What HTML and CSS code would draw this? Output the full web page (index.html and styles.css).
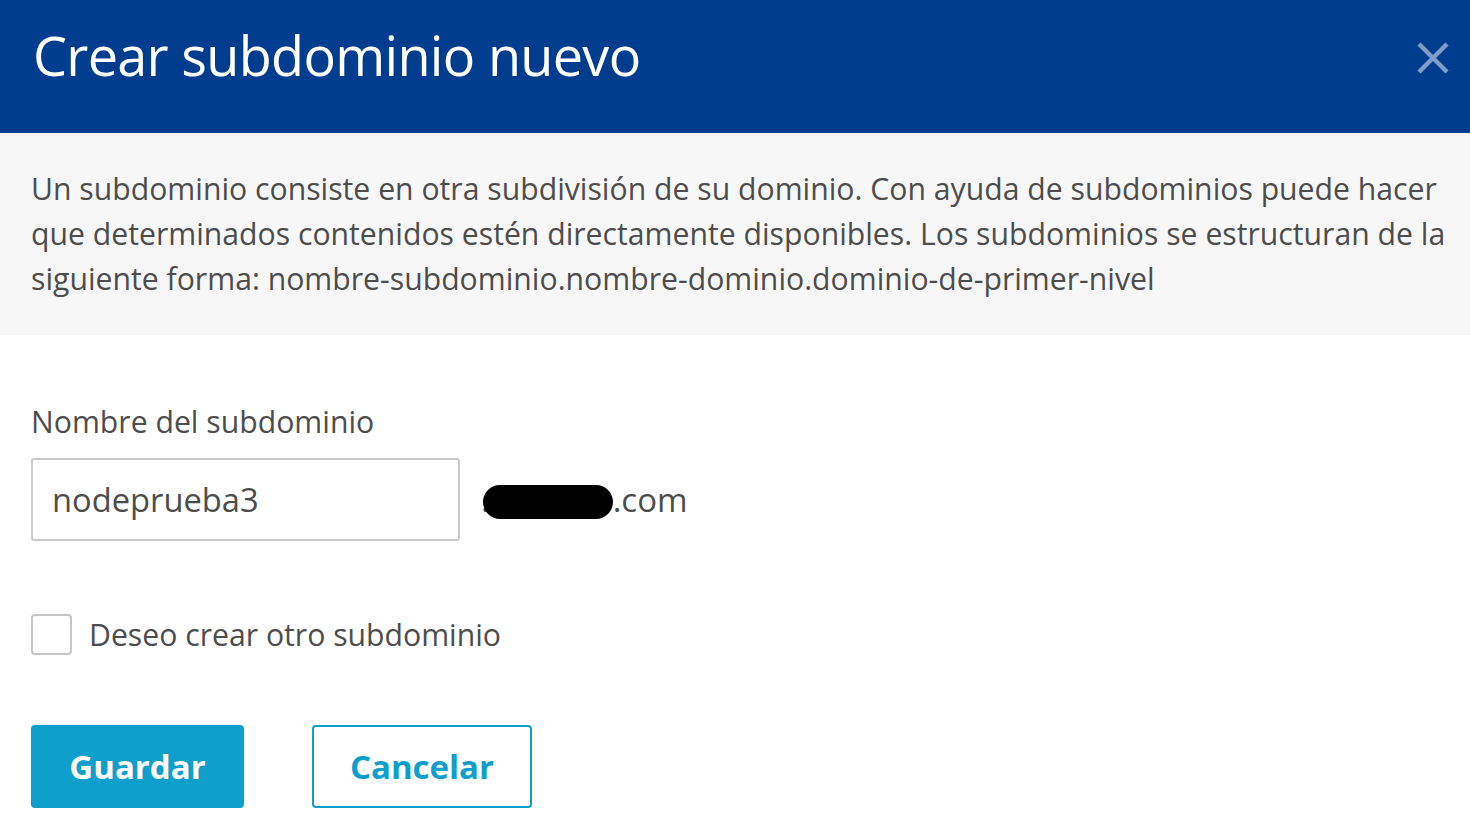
FILE: index.html
```html
<!DOCTYPE html>
<html lang="es">
<head>
<meta charset="utf-8">
<title>Crear subdominio nuevo</title>
<link rel="stylesheet" href="styles.css">
</head>
<body>
<div class="dialog">
  <header class="head">
    <h1 class="title">Crear subdominio nuevo</h1>
    <button class="close" aria-label="Cerrar">
      <svg width="34" height="34" viewBox="0 0 34 34"><path d="M3 3 L31 31 M31 3 L3 31" stroke="currentColor" stroke-width="4.5" fill="none"/></svg>
    </button>
  </header>
  <section class="info">
    <p>Un subdominio consiste en otra subdivisión de su dominio. Con ayuda de subdominios puede hacer que determinados contenidos estén directamente disponibles. Los subdominios se estructuran de la siguiente forma: nombre-subdominio.nombre-dominio.dominio-de-primer-nivel</p>
  </section>
  <form class="form">
    <label class="label" for="sub">Nombre del subdominio</label>
    <div class="row">
      <input id="sub" class="input" type="text" value="nodeprueba3">
      <span class="domain">.<span class="redact"></span>.com</span>
    </div>
    <label class="check">
      <span class="box"></span>
      <span>Deseo crear otro subdominio</span>
    </label>
    <div class="actions">
      <button type="button" class="btn primary">Guardar</button>
      <button type="button" class="btn secondary">Cancelar</button>
    </div>
  </form>
</div>
</body>
</html>
```
FILE: styles.css
```css
* { box-sizing: border-box; }
html, body { margin: 0; padding: 0; background: #fff; }
body { font-family: "Open Sans", "Liberation Sans", sans-serif; color: #4d4d4d; }
.dialog { width: 1470px; height: 819px; overflow: hidden; }
.head {
  background: #003d8f;
  height: 133px;
  display: flex;
  align-items: center;
  justify-content: space-between;
  padding: 0 20px 0 33px;
}
.title {
  margin: 0;
  color: #fff;
  font-weight: 400;
  font-size: 54px;
  letter-spacing: -0.7px;
  line-height: 1;
  padding-bottom: 24px;
}
.close {
  background: none; border: 0; padding: 0;
  color: #7f9dc9;
  display: flex;
  margin-bottom: 18px;
}
.info { background: #f7f7f7; height: 202px; padding: 33px 10px 0 31px; }
.info p { margin: 0; font-size: 30.2px; line-height: 45px; color: #4d4d4d; }
.form { padding: 67px 31px 0; display: flex; flex-direction: column; }
.label { font-size: 30.2px; line-height: 40px; color: #4d4d4d; }
.row { display: flex; align-items: center; margin-top: 16px; }
.input {
  width: 429px; height: 83px;
  border: 2px solid #cacaca; border-radius: 3px;
  padding: 0 19px;
  font-family: "Open Sans", "Liberation Sans", sans-serif;
  font-size: 32.7px; color: #4d4d4d;
  outline: none;
}
.domain { margin-left: 21px; font-size: 33px; display: flex; align-items: center; color: #4d4d4d; }
.redact { display: inline-block; width: 130px; height: 34px; background: #000; border-radius: 17px; margin: 4px 0 0 -7px; }
.check { display: flex; align-items: center; gap: 17px; margin-top: 73px; font-size: 30.2px; color: #4d4d4d; }
.box { width: 41px; height: 41px; border: 2px solid #c6c6c6; border-radius: 4px; background: #fff; }
.actions { display: flex; gap: 68px; margin-top: 70px; }
.btn {
  height: 83px; border-radius: 4px;
  font-family: "Open Sans", "Liberation Sans", sans-serif;
  font-weight: 700; font-size: 33px;
}
.primary { width: 213px; background: #0e9fcd; border: 2px solid #0e9fcd; color: #fff; }
.secondary { width: 220px; background: #fff; border: 2px solid #0e9fcd; color: #0e9fcd; }
```
